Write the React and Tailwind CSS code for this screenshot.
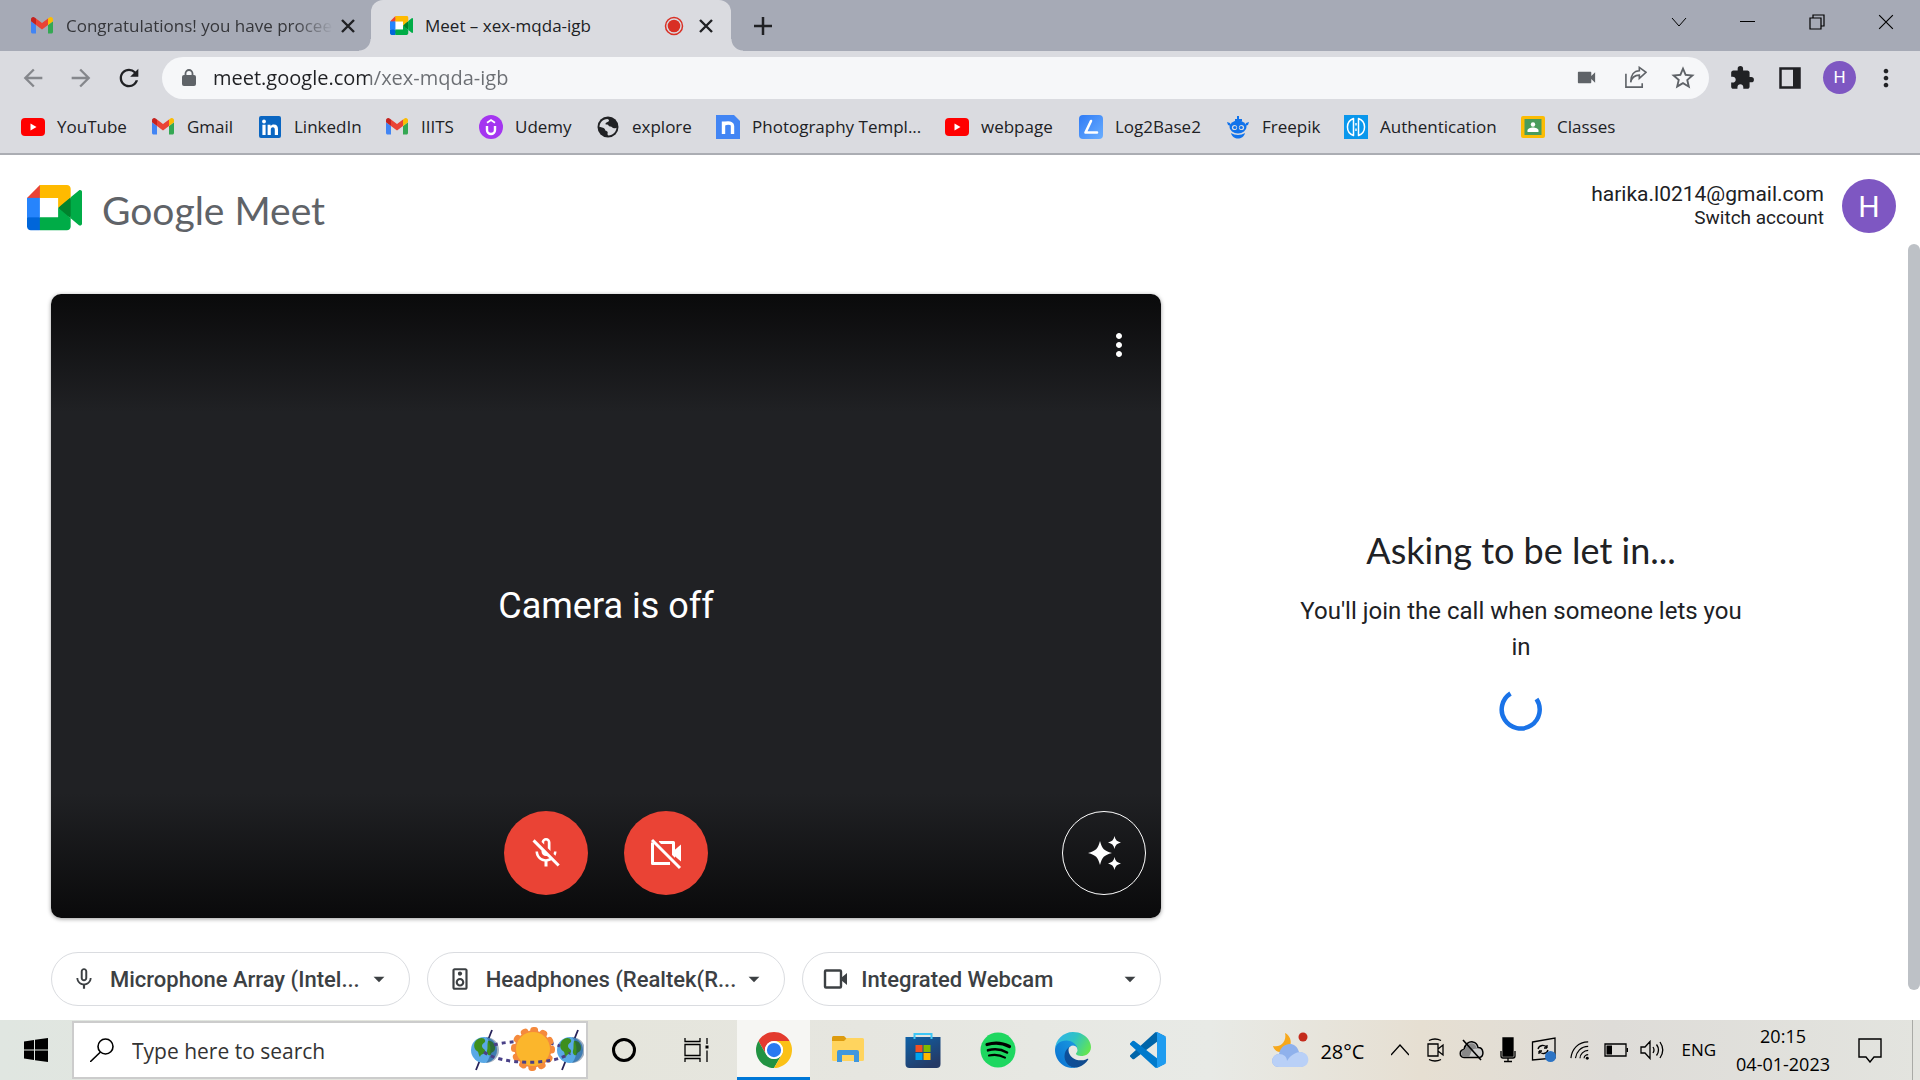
import React from 'react';
import {
  MdArrowBack, MdArrowForward, MdRefresh, MdVideocam, MdStarOutline, MdExtension,
  MdMoreVert, MdOutlineMicOff, MdMicNone, MdOutlineSpeaker, MdArrowDropDown,
} from 'react-icons/md';

const Gmail = ({ className }) => (
  <svg viewBox="52 42 88 66" className={className}>
    <path fill="#4285f4" d="M58 108h14V74L52 59v43c0 3.32 2.69 6 6 6" />
    <path fill="#34a853" d="M120 108h14c3.32 0 6-2.69 6-6V59l-20 15" />
    <path fill="#fbbc04" d="M120 48v26l20-15v-8c0-7.42-8.47-11.65-14.4-7.2" />
    <path fill="#ea4335" d="M72 74V48l24 18 24-18v26L96 92" />
    <path fill="#c5221f" d="M52 51v8l20 15V48l-5.6-4.2c-5.94-4.45-14.4-.22-14.4 7.2" />
  </svg>
);

const MeetLogo = ({ className }) => (
  <svg viewBox="0 0 87.5 72" className={className}>
    <path fill="#fff" d="M20 20h30v32H20z" />
    <path fill="#00832d" d="M49.5 36l8.53 9.75 11.47 7.33 2-17.02-2-16.64-11.69 6.44z" />
    <path fill="#0066da" d="M0 51.5V66c0 3.315 2.685 6 6 6h14.5l3-10.96-3-9.54-9.95-3z" />
    <path fill="#e94235" d="M20.5 0L0 20.5l10.55 3 9.95-3 2.95-9.41z" />
    <path fill="#2684fc" d="M20.5 20.5H0v31h20.5z" />
    <path fill="#00ac47" d="M82.6 8.68L69.5 19.42v33.66l13.16 10.79c1.97 1.54 4.85.135 4.85-2.37V11c0-2.535-2.945-3.925-4.91-2.32zM49.5 36v15.5h-29V72h43c3.315 0 6-2.685 6-6V53.08z" />
    <path fill="#ffba00" d="M63.5 0h-43v20.5h29V36l20-16.57V6c0-3.315-2.685-6-6-6z" />
  </svg>
);

const YouTube = () => (
  <svg viewBox="0 0 24 24" className="size-6">
    <rect y="3" width="24" height="18" rx="4" fill="#f00" />
    <path d="M9.5 8.500v7l6-3.500z" fill="#fff" />
  </svg>
);
const LinkedIn = () => (
  <svg viewBox="0 0 24 24" className="size-6">
    <rect x="1" y="1" width="22" height="22" rx="2" fill="#0a66c2" />
    <circle cx="6" cy="6.500" r="1.900" fill="#fff" />
    <path fill="#fff" d="M4.400 9.800h3.200V20H4.400zM9.600 9.800h3v1.400c.6-1 1.700-1.700 3.200-1.700 3 0 4.200 1.800 4.200 4.800V20h-3.200v-5c0-1.700-.5-2.700-1.900-2.700-1.500 0-2.100 1.100-2.100 2.700v5H9.600z" />
  </svg>
);
const Udemy = () => (
  <svg viewBox="0 0 24 24" className="size-6">
    <circle cx="12" cy="12" r="12" fill="#a435f0" />
    <path d="M8 11v4a4 4 0 0 0 8 0v-4" fill="none" stroke="#fff" strokeWidth="2.400" />
    <path d="M8 7.800 12 5l4 2.800" fill="none" stroke="#fff" strokeWidth="1.800" />
  </svg>
);
const Globe = () => (
  <svg viewBox="0 0 24 24" className="size-6">
    <circle cx="12" cy="12" r="10.500" fill="#202124" />
    <path fill="#dadbe0" d="M3.500 12c0-4 3-8 8-8 1.500.3 2 1.500 1 2.500-1.200 1-3 .8-3 2.300 0 1.400 2.500.2 3 1.700.4 1.500 3 .6 3.800 2 .6 1 2.500 1 4.200.2-.2 4-3.500 7.500-8 7.800-1.500-.5-.8-2-.8-3.200 0-1.300-2.500-.9-2.700-2.800C8.800 12.700 5.500 12.500 3.500 12z" />
  </svg>
);
const Template = () => (
  <svg viewBox="0 0 24 24" className="size-6">
    <path fill="#4285f4" d="M0 0h18l6 6v18H0z" />
    <path d="M7.500 19V6.500M7.500 10.500c0-3 9-4 9 .5v8" fill="none" stroke="#fff" strokeWidth="3.400" />
  </svg>
);
const Log2 = () => (
  <svg viewBox="0 0 24 24" className="size-6">
    <defs><linearGradient id="lg2" x1="0" x2="1" y1="0" y2="1"><stop stopColor="#2f7bf5" /><stop offset="1" stopColor="#6aaeff" /></linearGradient></defs>
    <rect width="24" height="24" rx="4" fill="url(#lg2)" />
    <path d="M12 6 6.500 17.500H18" fill="none" stroke="#fff" strokeWidth="2.600" strokeLinecap="round" strokeLinejoin="round" />
  </svg>
);
const Freepik = () => (
  <svg viewBox="0 0 24 24" className="size-6">
    <g fill="#1273eb">
      <path d="M11 1h2v3h-2zM9 4h7v2H9z" />
      <path d="M1 7l3 1 1 3-3-1zM23 7l-3 1-1 3 3-1z" />
      <ellipse cx="12" cy="12" rx="8.500" ry="6.500" />
      <path d="M5 18c4 2.500 10 2.500 14 0-1 4-4 5.500-7 5.500S6 22 5 18z" />
    </g>
    <circle cx="8.500" cy="12.500" r="2.600" fill="#dadbe0" /><circle cx="15.500" cy="12.500" r="2.600" fill="#dadbe0" />
    <circle cx="8.800" cy="12.500" r="1.600" fill="#1273eb" /><circle cx="15.200" cy="12.500" r="1.600" fill="#1273eb" />
  </svg>
);
const Auth = () => (
  <svg viewBox="0 0 24 24" className="size-6">
    <path fill="#0a97ec" d="M0 0h24v24H0z" />
    <path d="M9.500 3.500a9 9 0 0 0 0 17zM14.500 3.500a9 9 0 0 1 0 17z" fill="none" stroke="#fff" strokeWidth="1.500" strokeLinejoin="round" />
    <path d="M12 8v2.500M12 13.500V16" stroke="#fff" strokeWidth="1.400" />
  </svg>
);
const Classroom = () => (
  <svg viewBox="0 0 24 24" className="size-6">
    <rect y="1" width="24" height="22" rx="2" fill="#fbbc04" />
    <path fill="#4a9c5c" d="M3.500 4h17v16h-17z" />
    <circle cx="12" cy="9.500" r="2.200" fill="#fff" />
    <path fill="#fff" d="M6.500 17v-1.500c0-2 3-3 5.500-3s5.500 1 5.500 3V17z" />
  </svg>
);

const bookmarks = [
  ['YouTube', YouTube, 'w-[130px]'],
  ['Gmail', () => <Gmail className="w-6 px-px" />, 'w-[107px]'],
  ['LinkedIn', LinkedIn, 'w-[127px]'],
  ['IIITS', () => <Gmail className="w-6 px-px" />, 'w-[94px]'],
  ['Udemy', Udemy, 'w-[117px]'],
  ['explore', Globe, 'w-[120px]'],
  ['Photography Templ...', Template, 'w-[229px]'],
  ['webpage', YouTube, 'w-[134px]'],
  ['Log2Base2', Log2, 'w-[147px]'],
  ['Freepik', Freepik, 'w-[118px]'],
  ['Authentication', Auth, 'w-[177px]'],
  ['Classes', Classroom, 'w-[110px]'],
];

const Cross = ({ className, w = 2.4 }) => (
  <svg viewBox="0 0 14 14" className={className} stroke="currentColor" strokeWidth={w}><path d="M1 1l12 12M13 1 1 13" /></svg>
);

function TabStrip() {
  return (
    <div className="flex h-[51px] shrink-0 bg-[#a6aab6]">
      <div className="flex w-[371px] items-center pl-[31px]">
        <Gmail className="w-[22px]" />
        <span className="ml-[13px] w-[267px] overflow-hidden whitespace-nowrap text-[17px] text-[#35363a] [mask-image:linear-gradient(90deg,#000_85%,transparent)]">Congratulations! you have procee</span>
        <button aria-label="Close tab" className="ml-2 text-[#202124]"><Cross className="size-[14px]" /></button>
      </div>
      <div className="relative flex w-[360px] items-center rounded-t-[12px] bg-[#dadbe0] pl-[19px] pr-[18px]">
        <span className="absolute -left-3 bottom-0 size-3 bg-[radial-gradient(circle_at_0_0,transparent_11px,#dadbe0_12px)]" />
        <span className="absolute -right-3 bottom-0 size-3 bg-[radial-gradient(circle_at_100%_0,transparent_11px,#dadbe0_12px)]" />
        <MeetLogo className="w-[23px]" />
        <span className="ml-3 flex-1 whitespace-nowrap text-[17px]">Meet – xex-mqda-igb</span>
        <svg viewBox="0 0 20 20" className="size-5"><circle cx="10" cy="10" r="8.500" fill="none" stroke="#d93025" strokeWidth="1.500" /><circle cx="10" cy="10" r="6.300" fill="#d93025" /></svg>
        <button aria-label="Close tab" className="ml-[15px]"><Cross className="size-[14px]" /></button>
      </div>
      <button aria-label="New tab" className="ml-[23px] self-center">
        <svg viewBox="0 0 18 18" className="size-[18px]" stroke="#202124" strokeWidth="2.500"><path d="M9 0v18M0 9h18" /></svg>
      </button>
      <div className="ml-auto flex h-[43px] items-center text-black">
        <button aria-label="Search tabs" className="grid w-[69px] place-items-center"><svg viewBox="0 0 16 16" className="size-4" fill="none" stroke="currentColor"><path d="M1 4l7 8 7-8" /></svg></button>
        <button aria-label="Minimize" className="grid w-[69px] place-items-center"><span className="h-px w-[15px] bg-black" /></button>
        <button aria-label="Restore" className="grid w-[69px] place-items-center"><svg viewBox="0 0 16 16" className="size-4" fill="none" stroke="currentColor" strokeWidth="1.200"><path d="M1 4h11v11H1zM4 4V1h11v11h-3" /></svg></button>
        <button aria-label="Close" className="grid w-[69px] place-items-center"><Cross className="size-4" w={1} /></button>
      </div>
    </div>
  );
}

function Toolbar() {
  return (
    <div className="flex h-[53px] shrink-0 items-center bg-[#dadbe0] pl-[19px] pr-5">
      <button aria-label="Back" className="text-[#85878c]"><MdArrowBack className="size-7" /></button>
      <button aria-label="Forward" className="ml-5 text-[#85878c]"><MdArrowForward className="size-7" /></button>
      <button aria-label="Reload" className="ml-5 text-[#202124]"><MdRefresh className="size-7" /></button>
      <div className="ml-[19px] flex h-[42px] flex-1 items-center rounded-full bg-[#f6f7f9] pl-5 pr-3 text-[#5f6368]">
        <svg viewBox="0 0 14 18" className="h-[18px] w-[14px] shrink-0"><rect y="6" width="14" height="11" rx="2" fill="currentColor" /><path d="M3.500 7V4.500a3.500 3.500 0 0 1 7 0V7" fill="none" stroke="currentColor" strokeWidth="1.800" /></svg>
        <input aria-label="Address" defaultValue="meet.google.com/xex-mqda-igb" className="ml-[17px] min-w-0 flex-1 bg-[linear-gradient(90deg,#202124_157px,#6b6e73_157px)] bg-clip-text text-[20px] leading-7 text-transparent outline-none" />
        <div className="flex items-center gap-[26px]">
          <button aria-label="Camera in use"><MdVideocam className="size-[23px]" /></button>
          <button aria-label="Share">
            <svg viewBox="0 0 24 24" className="size-[23px]" fill="none" stroke="#5f6368" strokeWidth="1.700"><path d="M2 8v14h17v-4" /><path d="M7 17c1-5 4-7.500 9-7.500V13l7-6.500-7-5V5C10.500 5 7 9.500 7 17z" /></svg>
          </button>
          <button aria-label="Bookmark this page" className="-ml-1"><MdStarOutline className="size-7" /></button>
        </div>
      </div>
      <div className="ml-5 flex items-center text-[#202124]">
        <button aria-label="Extensions"><MdExtension className="size-[26px]" /></button>
        <button aria-label="Side panel" className="ml-6"><svg viewBox="0 0 22 22" className="size-[22px]"><path fill="none" stroke="#202124" strokeWidth="2.500" d="M1.500 1.500h19v19h-19z" /><path fill="#202124" d="M14 1h7v20h-7z" /></svg></button>
        <button aria-label="Profile" className="ml-[22px] grid size-[33px] place-items-center rounded-full bg-[#7e57c2] font-['Roboto'] text-[17px] text-white">H</button>
        <button aria-label="Menu" className="ml-4"><MdMoreVert className="size-7" /></button>
      </div>
    </div>
  );
}

function Device({ icon, text, label }) {
  return (
    <label className="flex h-[54px] flex-1 items-center rounded-full border border-[#dadce0] pl-[19px] pr-[17px] text-[#3c4043]">
      {icon}
      <select aria-label={label} className="ml-[13px] min-w-0 flex-1 appearance-none bg-transparent font-['Roboto'] text-[22px] font-medium outline-none">
        <option>{text}</option>
      </select>
      <MdArrowDropDown className="size-[26px] shrink-0" />
    </label>
  );
}

const Camera = () => (
  <svg viewBox="0 0 26 26" className="size-[26px] shrink-0">
    <rect x="3" y="4.500" width="16" height="17" rx="1" fill="none" stroke="currentColor" strokeWidth="2.400" />
    <path fill="currentColor" d="M19 12l6-5v12l-6-5z" />
  </svg>
);

const CameraOff = () => (
  <svg viewBox="0 0 36 36" className="size-9">
    <path d="M11 7.500h14.500v16M22 28.500H4.500v-21" fill="none" stroke="currentColor" strokeWidth="3" strokeLinejoin="round" />
    <path fill="currentColor" d="M26 15.500l7-6v17l-7-6z" />
    <path d="M6 4l28 28" stroke="#ea4335" strokeWidth="3" />
    <path d="M4 5l28 28" stroke="currentColor" strokeWidth="3" />
  </svg>
);

function Meet() {
  return (
    <>
      <header className="flex h-[89px] shrink-0 items-center bg-white pl-[27px] pr-6 pt-[13px]">
        <MeetLogo className="mt-1 w-[55px]" />
        <h1 className="ml-5 mt-2 font-['Lato'] text-[39px] leading-[48px] text-[#5f6368]">Google Meet</h1>
        <div className="ml-auto flex items-center font-['Roboto'] text-[#202124]">
          <div className="text-right">
            <p className="text-[21px] leading-6">harika.l0214@gmail.com</p>
            <a href="#switch" className="block text-[19px] leading-6">Switch account</a>
          </div>
          <button aria-label="Account" className="ml-[18px] grid size-[54px] place-items-center rounded-full bg-[#7e57c2] text-[30px] text-white">H</button>
        </div>
      </header>
      <div className="flex min-h-0 flex-1 bg-white">
        <main className="grid flex-1 grid-cols-[37fr_24fr] pl-[51px] pr-[27px] pt-[50px]">
          <div>
            <section className="relative grid aspect-video place-items-center rounded-[10px] bg-[linear-gradient(#0a0a0b_0%,#202124_19%,#202124_80%,#0a0a0b_100%)] shadow-[0_1px_4px_rgba(0,0,0,0.4)]">
              <p className="font-['Roboto'] text-[36px] text-white">Camera is off</p>
              <button aria-label="More options" className="absolute right-[24px] top-[33px] text-white"><MdMoreVert className="size-9" /></button>
              <div className="absolute inset-x-0 bottom-[23px] flex justify-center gap-9">
                <button aria-label="Turn on microphone" className="grid size-[84px] place-items-center rounded-full bg-[#ea4335] text-white"><MdOutlineMicOff className="size-9" /></button>
                <button aria-label="Turn on camera" className="grid size-[84px] place-items-center rounded-full bg-[#ea4335] text-white"><CameraOff /></button>
              </div>
              <button aria-label="Apply visual effects" className="absolute bottom-[23px] right-[15px] grid size-[84px] place-items-center rounded-full border border-white text-white">
                <svg viewBox="0 0 36 36" className="size-9" fill="currentColor">
                  <path d="M14 6c2.200 8 4 9.800 12 12-8 2.200-9.800 4-12 12-2.200-8-4-9.800-12-12 8-2.200 9.800-4 12-12z" />
                  <path d="M28.500 1c1.100 4.200 2.300 5.400 6.500 6.500-4.200 1.100-5.400 2.300-6.500 6.500-1.100-4.200-2.300-5.400-6.500-6.500 4.200-1.100 5.400-2.300 6.500-6.500zM28.500 22c1.100 4.200 2.300 5.400 6.500 6.500-4.200 1.100-5.400 2.300-6.500 6.500-1.100-4.200-2.300-5.400-6.500-6.500 4.200-1.100 5.400-2.300 6.500-6.500z" />
                </svg>
              </button>
            </section>
            <div className="mt-[34px] flex gap-[17px]">
              <Device label="Microphone" text="Microphone Array (Intel..." icon={<MdMicNone className="size-[26px] shrink-0" />} />
              <Device label="Speaker" text="Headphones (Realtek(R..." icon={<MdOutlineSpeaker className="size-[26px] shrink-0" />} />
              <Device label="Camera" text="Integrated Webcam" icon={<Camera />} />
            </div>
          </div>
          <section className="flex flex-col items-center justify-center pb-[54px] text-center font-['Roboto'] text-[#202124]">
            <h2 className="font-['Lato'] text-[36px] leading-[44px]">Asking to be let in...</h2>
            <p className="mt-[21px] max-w-[460px] text-[24px] leading-9">You'll join the call when someone lets you in</p>
            <svg viewBox="0 0 44 44" className="mt-[23px] size-[44px]" fill="none" stroke="#1a73e8" strokeWidth="4.500"><path d="M11.500 5.500a19 19 0 1 0 26 5.500" /></svg>
          </section>
        </main>
        <div className="w-3 pb-[30px]"><div className="h-full rounded-full bg-[#bdc1c6]" /></div>
      </div>
    </>
  );
}

const Chrome = () => (
  <svg viewBox="0 0 48 48" className="size-9">
    <path fill="#e33b2e" d="M24 12h20.780A24 24 0 0 0 3.220 12L13.600 30A12 12 0 0 1 24 12z" />
    <path fill="#229342" d="M13.600 30 3.220 12A24 24 0 0 0 24 48l10.400-18a12 12 0 0 1-20.800 0z" />
    <path fill="#fbc116" d="M34.400 30 24 48a24 24 0 0 0 20.780-36H24a12 12 0 0 1 10.400 18z" />
    <circle cx="24" cy="24" r="12" fill="#fff" /><circle cx="24" cy="24" r="9.500" fill="#2a7af0" />
  </svg>
);
const Explorer = () => (
  <svg viewBox="0 0 32 28" className="w-8">
    <path fill="#dd9b0e" d="M0 1.500Q0 0 1.500 0H12l3 3-3 4H0z" />
    <path fill="#ffd45e" d="M0 5h12l3-3h15.500Q32 2 32 3.500v20q0 1.500-1.500 1.500h-29Q0 25 0 23.500z" />
    <path fill="#3f97dd" d="M5 26V16q0-2 2-2h18q2 0 2 2v10h-5v-7H10v7z" />
  </svg>
);
const Store = () => (
  <svg viewBox="0 0 36 36" className="size-9">
    <defs><linearGradient id="st" x1="0" x2=".6" y1="0" y2="1"><stop stopColor="#0f62a8" /><stop offset="1" stopColor="#243a66" /></linearGradient></defs>
    <path fill="url(#st)" d="M.5 5h35v27q0 4-4 4h-27q-4 0-4-4z" />
    <path d="M9.500 7V2h17v5" fill="none" stroke="#3ec6f5" strokeWidth="2" />
    <path fill="#f25022" d="M10.500 13h7v7h-7z" /><path fill="#7fba00" d="M18.500 13h7v7h-7z" />
    <path fill="#00a4ef" d="M10.500 21h7v7h-7z" /><path fill="#ffb900" d="M18.500 21h7v7h-7z" />
  </svg>
);
const Spotify = () => (
  <svg viewBox="0 0 36 36" className="size-9"><circle cx="18" cy="18" r="17.500" fill="#1ed760" />
    <g fill="none" stroke="#000" strokeLinecap="round"><path d="M7 12.500c8-2.500 16-1.500 22.500 2" strokeWidth="3.200" /><path d="M8 18.300c7-2 13.500-1 19 2.200" strokeWidth="2.600" /><path d="M9 23.600c6-1.500 11-.7 16 2" strokeWidth="2.100" /></g>
  </svg>
);
const Edge = () => (
  <svg viewBox="0 0 256 256" className="size-9">
    <defs>
      <linearGradient id="e1" x1="0" x2="1"><stop stopColor="#0c4f9c" /><stop offset="1" stopColor="#114a8b" /></linearGradient>
      <linearGradient id="e2" x1="1" x2="0" y1="0" y2="1"><stop stopColor="#1b9de2" /><stop offset="1" stopColor="#0a6fd0" /></linearGradient>
      <linearGradient id="e3" x1="0" x2="1" y1=".2" y2=".6"><stop stopColor="#2fb3ea" /><stop offset=".5" stopColor="#2fc3c4" /><stop offset="1" stopColor="#62e552" /></linearGradient>
    </defs>
    <path fill="url(#e1)" d="M231 190.500c-3.400 1.800-6.900 3.400-10.500 4.700-11.500 4.300-23.600 6.500-35.900 6.500-47.300 0-88.500-32.500-88.500-74.300.1-11.400 6.400-21.900 16.400-27.300-42.800 1.800-53.800 46.400-53.800 72.500 0 73.900 68.100 81.400 82.800 81.400 7.900 0 19.800-2.300 27-4.600l1.300-.4c27.600-9.500 51-28.100 66.600-52.800 1.200-1.900.6-4.300-1.200-5.500-1.300-.8-2.900-.9-4.200-.2z" />
    <path fill="url(#e2)" d="M105.700 241.400c-8.900-5.500-16.600-12.800-22.700-21.300-26.300-36-18.400-86.500 17.600-112.800 3.800-2.700 7.700-5.200 11.900-7.200 3.100-1.500 8.400-4.100 15.500-4 10.100.1 19.600 4.900 25.700 13 4 5.400 6.300 11.900 6.400 18.700 0-.2 24.500-79.600-80-79.600-43.900 0-80 41.700-80 78.200-.2 19.300 4 38.500 12.100 56 27.600 58.800 94.800 87.600 156.400 67.100-21.100 6.600-44.100 3.700-62.900-8.100z" />
    <path fill="url(#e3)" d="M152.300 148.900c-.9 1-3.400 2.500-3.400 5.600 0 2.600 1.700 5.200 4.800 7.300 14.300 10 41.400 8.600 41.500 8.600 10.700 0 21.100-2.900 30.300-8.300 18.800-11 30.400-31.100 30.400-52.900.3-22.400-8-37.300-11.300-43.900C223.500 23.900 177.700 0 128 0 58 0 1 56.200 0 126.200c.5-36.500 36.800-66 80-66 3.500 0 23.500.3 42 10.100 16.300 8.600 24.900 18.900 30.800 29.200 6.200 10.700 7.300 24.100 7.300 29.500s-2.700 13.300-7.800 19.900z" />
  </svg>
);
const Code = () => (
  <svg viewBox="0 0 100 100" className="size-9">
    <path fill="#0065a9" d="M96.460 10.800 75.860.88a6.230 6.230 0 0 0-7.100 1.200L1.300 63.580a4.170 4.170 0 0 0 0 6.160l5.510 5.010a4.170 4.170 0 0 0 5.320.24l81.230-61.620A4.140 4.140 0 0 1 100 16.670v-.24a6.250 6.250 0 0 0-3.540-5.630z" />
    <path fill="#007acc" d="M96.460 89.200l-20.600 9.920a6.230 6.230 0 0 1-7.100-1.200L1.300 36.420a4.170 4.170 0 0 1 0-6.160l5.510-5.010a4.170 4.170 0 0 1 5.320-.24l81.230 61.620A4.140 4.140 0 0 0 100 83.330v.24a6.250 6.250 0 0 1-3.540 5.630z" />
    <path fill="#1f9cf0" d="M75.860 99.130a6.230 6.230 0 0 1-7.110-1.210A3.660 3.660 0 0 0 75 95.330V4.670a3.660 3.660 0 0 0-6.250-2.590A6.230 6.230 0 0 1 75.860.87l20.600 9.910A6.250 6.250 0 0 1 100 16.410v67.180a6.250 6.250 0 0 1-3.540 5.630z" />
  </svg>
);

const Earth = ({ x }) => (
  <g transform={`translate(${x} 25)`}>
    <path d="M8-20-8 20" stroke="#28235a" strokeWidth="1.800" />
    <circle r="13" fill="#5aa9e6" />
    <path fill="#3d8f1d" d="M-9-8c3-5 9-5 10-2s-3 3-3 6 4 3 3 6-4 1-5 5c-2-3-1-5-3-6s-4-5-2-9zM4-9c4-1 8 4 7 8s-3 2-4 5-5 0-4-3 0-7 1-10z" />
    <path d="M2-13a13 13 0 0 1 0 26c6-7 6-19 0-26z" fill="#173a63" opacity=".4" />
  </g>
);
const SolarArt = () => (
  <svg viewBox="0 0 114 50" className="h-[50px] w-[114px] shrink-0">
    <Earth x={14} /><Earth x={100} />
    <path d="M24 20C40 15 76 15 90 21" fill="none" stroke="#4a4188" strokeWidth="3" strokeDasharray="4 4" />
    <circle cx="63" cy="24" r="18.500" fill="#f58a3c" stroke="#f58a3c" strokeWidth="7" strokeLinecap="round" strokeDasharray="1 8.700" />
    <circle cx="63" cy="24" r="17" fill="#fbb62c" />
    <path d="M14 27C30 40 84 41 100 28" fill="none" stroke="#4a4188" strokeWidth="3" strokeDasharray="4 4" />
  </svg>
);

const apps = [['File Explorer', Explorer], ['Microsoft Store', Store], ['Spotify', Spotify], ['Microsoft Edge', Edge], ['Visual Studio Code', Code]];

const tray = [
  ['Show hidden icons', <svg viewBox="0 0 18 12" className="w-[18px]"><path d="M0 11 9 1l9 10" /></svg>],
  ['Meet now', <svg viewBox="0 0 18 24" className="w-[18px]"><path d="M1 6h10v12H1zM11 11l5-4v10l-5-4M2 2.500q6-3 12 0M2 21.500q6 3 12 0" /></svg>],
  ['OneDrive', <svg viewBox="0 0 26 22" className="w-[26px]"><path fill="#ccc" strokeWidth="1.500" d="M5 18.500C0 18 0 11 5 10.500 6 5 10 2 14 3c3 .5 4.500 3 5 5.500 6 0 6.500 9 1.500 10z" /><path fill="#888" stroke="none" d="M6 10c3-7 10-8 12 0-6-1-5 3-8 8H4c-3-3-1-7 2-8z" /><path d="M4 1l18 20" strokeWidth="1.600" /></svg>],
  ['Microphone in use', <svg viewBox="0 0 16 26" className="w-4"><path fill="#000" d="M3 1h10v18H3z" /><path d="M1 14v5q0 2 2 2h10q2 0 2-2v-5M8 21v4M4 24.500h8" /></svg>],
  ['Update', <svg viewBox="0 0 26 26" className="w-[26px]"><path d="M1.500 5 24 1v20L1.500 23zM7 12c1-4 7-5 9-1V8M17 13c-1 4-7 5-9 1v3M16 11h-3M8 14h3" /><circle cx="19.500" cy="19.500" r="5.500" fill="#2d74c4" stroke="none" /></svg>],
  ['Network', <svg viewBox="0 0 22 22" className="w-[20px]"><path d="M1 20C2 10 9 2 20 2M6 20c1-7 6-13 14-13M11 20c0-4 4-8.500 9-8.500M15.500 20c0-2 2-4 4.500-4" /><circle cx="19" cy="20" r="1.600" fill="#000" stroke="none" /></svg>],
  ['Battery', <svg viewBox="0 0 24 14" className="w-6"><path d="M1 1h21v12H1zM23.500 5v4" /><path fill="#000" stroke="none" d="M2.500 2.500H8v9H2.500z" /></svg>],
  ['Volume', <svg viewBox="0 0 24 20" className="w-6"><path d="M1 7h4l5-5.500v17L5 13H1zM13 7q2 3 0 6M16.500 4.500q4 5.500 0 11M20 2q5.500 8 0 16" /></svg>],
];

function Taskbar() {
  return (
    <footer className="flex h-[60px] shrink-0 items-center bg-[linear-gradient(90deg,#e0e6e1_0%,#e5e5dc_31%,#e6e6e0_45%,#e8eae6_63%,#e6dfd2_74%,#dedcd8_84%,#e3e4df_100%)] text-black">
      <button aria-label="Start" className="grid w-[72px] place-items-center">
        <svg viewBox="0 0 24 24" className="size-6"><path d="M0 3.400 10 2v9.500H0zM11 1.800 24 0v11.500H11zM0 12.500h10V22L0 20.600zM11 12.500h13V24l-13-1.800z" /></svg>
      </button>
      <label className="flex h-[58px] w-[516px] items-center border-2 border-[#ccc] bg-white pl-4 pr-0.5">
        <svg viewBox="0 0 24 24" className="size-6 shrink-0" fill="none" stroke="#000" strokeWidth="1.600"><circle cx="15.500" cy="8.500" r="7.500" /><path d="M10.500 14 0 24" /></svg>
        <input aria-label="Search" placeholder="Type here to search" className="ml-[18px] min-w-0 flex-1 pt-1 text-[21px] outline-none placeholder:text-[#333]" />
        <SolarArt />
      </label>
      <button aria-label="Cortana" className="grid w-[72px] place-items-center"><span className="size-6 rounded-full border-3 border-black" /></button>
      <button aria-label="Task view" className="grid w-[77px] place-items-center pr-1">
        <svg viewBox="0 0 25 24" className="w-[25px]" fill="none" stroke="#000" strokeWidth="1.300"><path d="M1 0v3.500h15V0M1 6.500h15v11H1zM1 24v-3.500h15V24M23 0v6M23 12.500V24" /><path d="M21.500 9h3" strokeWidth="3" /></svg>
      </button>
      <button aria-label="Google Chrome" className="grid h-full w-[73px] place-items-center border-b-3 border-[#0078d7] bg-[#f6f6f3] pt-[3px]"><Chrome /></button>
      {apps.map(([name, Icon]) => <button key={name} aria-label={name} className="grid w-[75px] place-items-center"><Icon /></button>)}
      <div className="ml-auto flex h-full items-center">
        <button className="mr-[18px] flex items-center text-[20px]">
          <svg viewBox="0 0 36 36" className="mr-3 size-9 overflow-visible">
            <path fill="#f7a81b" d="M13 1c8 4 8 16-2 19-5 1-9-2-10-6 8 2 14-5 12-13z" />
            <circle cx="31" cy="5" r="4.500" fill="#c42b1c" />
            <path fill="#8fb1ec" d="M7 35c-9 0-9-12 0-13C9 10 24 8 27 20c11 0 11 15 1 15z" />
            <path fill="#b9d0f7" d="M7 35c-9 0-9-12 0-13 5 0 8 3 8 7 3-6 10-9 13-9 11 0 11 15 1 15z" />
          </svg>
          <span className="pt-1">28°C</span>
        </button>
        {tray.map(([name, icon]) => (
          <button key={name} aria-label={name} className="grid w-9 place-items-center fill-none stroke-black stroke-[1.3]">{icon}</button>
        ))}
        <button className="ml-[11px] text-[17px]">ENG</button>
        <time className="ml-[20px] text-center text-[18px] leading-7">20:15<br />04-01-2023</time>
        <button aria-label="Notifications" className="ml-7 mr-[30px]">
          <svg viewBox="0 0 24 25" className="w-6" fill="none" stroke="#000" strokeWidth="1.400"><path d="M1 1h22v18h-7l-4 5-4-5H1z" /></svg>
        </button>
        <div className="mr-[7px] h-full w-px bg-[#a9aaa6]" />
      </div>
    </footer>
  );
}

export default function App() {
  return (
    <div className="flex h-screen flex-col overflow-hidden font-['Open_Sans',sans-serif] text-[#202124]">
      <TabStrip />
      <Toolbar />
      <nav className="flex h-[51px] shrink-0 items-center border-b-2 border-[#abadb3] bg-[#dadbe0] pb-1 pl-[21px] text-[17px]">
        {bookmarks.map(([name, Icon, width]) => (
          <a key={name} href="#bookmark" className={`flex shrink-0 items-center gap-3 whitespace-nowrap ${width}`}><Icon />{name}</a>
        ))}
      </nav>
      <Meet />
      <Taskbar />
    </div>
  );
}
